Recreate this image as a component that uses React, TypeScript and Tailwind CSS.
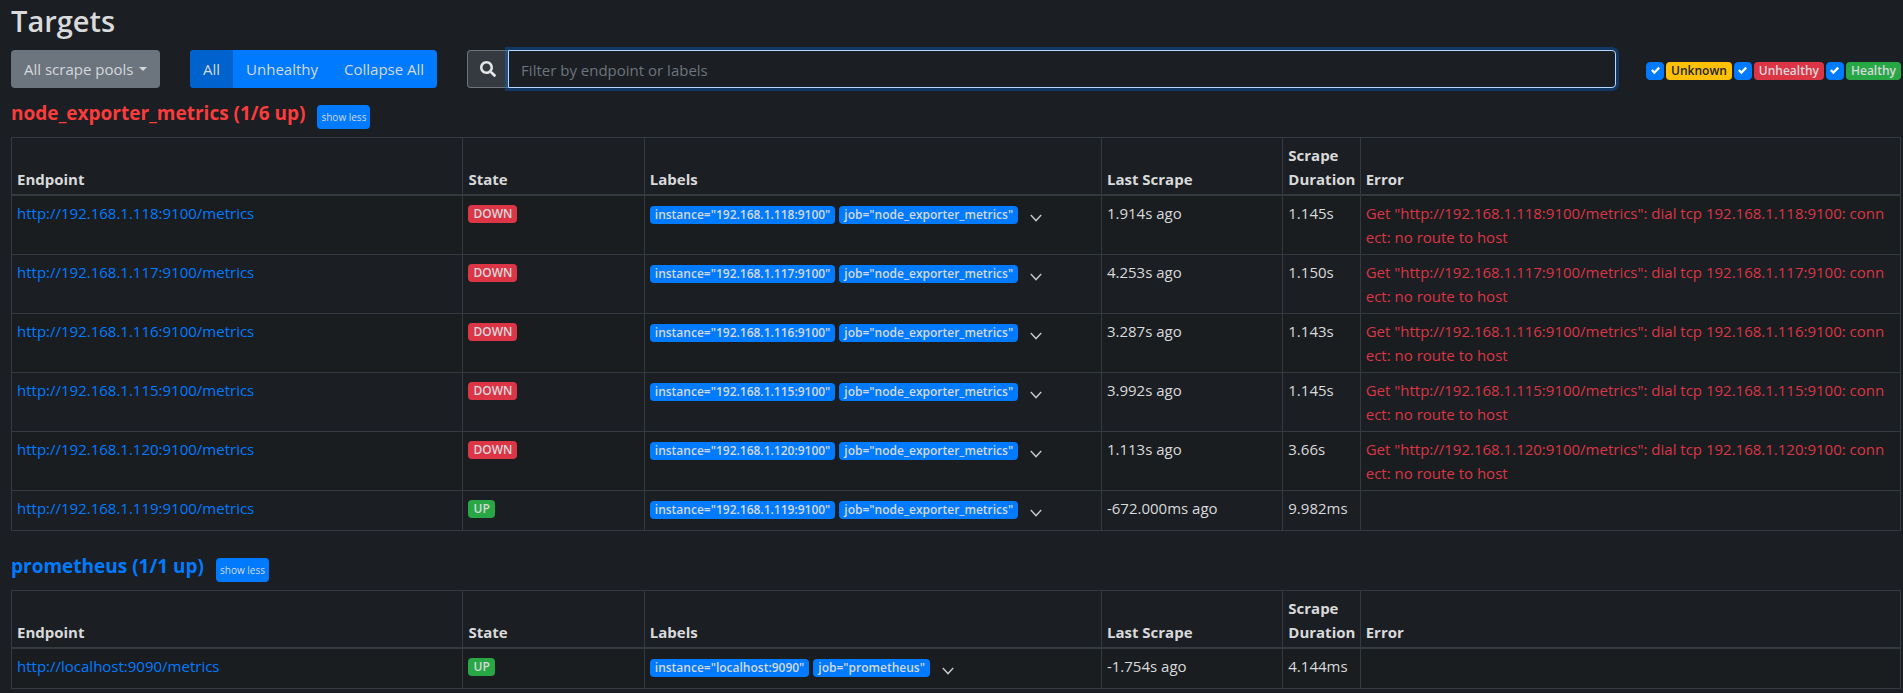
import React, { useState } from 'react';

type Target = {
  host: string;
  up: boolean;
  job: string;
  lastScrape: string;
  duration: string;
  error?: string;
};

type Pool = { name: string; summary: string; healthy: boolean; targets: Target[] };

const down = (host: string, lastScrape: string, duration: string): Target => ({
  host,
  up: false,
  job: 'node_exporter_metrics',
  lastScrape,
  duration,
  error: `Get "http://${host}/metrics": dial tcp ${host}: connect: no route to host`,
});

const pools: Pool[] = [
  {
    name: 'node_exporter_metrics',
    summary: '(1/6 up)',
    healthy: false,
    targets: [
      down('192.168.1.118:9100', '1.914s ago', '1.145s'),
      down('192.168.1.117:9100', '4.253s ago', '1.150s'),
      down('192.168.1.116:9100', '3.287s ago', '1.143s'),
      down('192.168.1.115:9100', '3.992s ago', '1.145s'),
      down('192.168.1.120:9100', '1.113s ago', '3.66s'),
      {
        host: '192.168.1.119:9100',
        up: true,
        job: 'node_exporter_metrics',
        lastScrape: '-672.000ms ago',
        duration: '9.982ms',
      },
    ],
  },
  {
    name: 'prometheus',
    summary: '(1/1 up)',
    healthy: true,
    targets: [
      { host: 'localhost:9090', up: true, job: 'prometheus', lastScrape: '-1.754s ago', duration: '4.144ms' },
    ],
  },
];

const badgeColors = {
  blue: 'bg-[#007bff] text-[#d5d8dc]',
  red: 'bg-[#dc3545] text-[#d5d8dc]',
  green: 'bg-[#28a745] text-[#d5d8dc]',
  yellow: 'bg-[#ffc107] text-[#212529]',
};

function Badge({ color, children }: { color: keyof typeof badgeColors; children: React.ReactNode }) {
  return (
    <span
      className={`inline-flex h-[18px] items-center rounded px-[5px] text-[12px] font-semibold whitespace-nowrap ${badgeColors[color]}`}
    >
      {children}
    </span>
  );
}

function HealthFilter({ color, name }: { color: keyof typeof badgeColors; name: string }) {
  return (
    <label className="flex items-center gap-[2px]">
      <span className="grid">
        <input
          type="checkbox"
          defaultChecked
          className="peer size-[18px] appearance-none rounded border border-[#adb5bd] [grid-area:1/1] checked:border-[#007bff] checked:bg-[#007bff]"
        />
        <svg
          viewBox="0 0 8 8"
          className="pointer-events-none hidden size-[9px] place-self-center [grid-area:1/1] peer-checked:block"
          aria-hidden="true"
        >
          <path fill="#fff" d="M6.564.75l-3.59 3.612-1.538-1.55L0 4.26l2.974 2.99L8 2.193z" />
        </svg>
      </span>
      <Badge color={color}>{name}</Badge>
    </label>
  );
}

function TargetRow({ target }: { target: Target }) {
  const url = `http://${target.host}/metrics`;
  const cell = 'border border-[#343a40] py-[5px] pl-[5px]';
  return (
    <tr className="align-top odd:bg-[#1a1d20]">
      <td className={cell}>
        <a href={url} className="text-[#007bff] hover:underline">
          {url}
        </a>
      </td>
      <td className={cell}>
        <div className="flex h-[25px] items-center">
          <Badge color={target.up ? 'green' : 'red'}>{target.up ? 'UP' : 'DOWN'}</Badge>
        </div>
      </td>
      <td className={cell}>
        <div className="flex h-[29px] items-start gap-1 pt-[5px]">
          <Badge color="blue">{`instance="${target.host}"`}</Badge>
          <Badge color="blue">{`job="${target.job}"`}</Badge>
          <button
            type="button"
            aria-label={`Show discovered labels of ${target.host}`}
            className="ml-1 flex h-6 w-5 items-center justify-center text-[#c3c6ca]"
          >
            <svg viewBox="0 0 12 8" className="h-2 w-3" fill="none" stroke="currentColor" strokeWidth="1.4" aria-hidden="true">
              <path d="M.8 1 6 6.6 11.2 1" />
            </svg>
          </button>
        </div>
      </td>
      <td className={cell}>{target.lastScrape}</td>
      <td className={cell}>{target.duration}</td>
      <td className={`${cell} pr-3 break-all text-[#dc3545]`}>{target.error}</td>
    </tr>
  );
}

function PoolSection({ pool }: { pool: Pool }) {
  const [open, setOpen] = useState(true);
  const head = 'border border-b-2 border-[#343a40] px-[5px] pt-[5px] pb-[3px] text-left align-bottom font-bold';
  return (
    <section>
      <div className="flex items-start gap-3">
        <h3 className={`text-[19px] leading-6 font-bold ${pool.healthy ? 'text-[#007bff]' : 'text-[#fb3c3c]'}`}>
          {pool.name} {pool.summary}
        </h3>
        <button
          type="button"
          onClick={() => setOpen(!open)}
          className="mt-1 h-6 rounded bg-[#007bff] px-1 pb-px text-[10px] leading-none text-[#d5d8dc]"
        >
          show {open ? 'less' : 'more'}
        </button>
      </div>
      {open && (
        <table className="mt-2 w-full table-fixed border-collapse">
          <colgroup>
            <col className="w-[23.9%]" />
            <col className="w-[9.6%]" />
            <col className="w-[24.2%]" />
            <col className="w-[9.6%]" />
            <col className="w-[4.1%]" />
            <col />
          </colgroup>
          <thead>
            <tr>
              <th className={head}>Endpoint</th>
              <th className={head}>State</th>
              <th className={head}>Labels</th>
              <th className={head}>Last Scrape</th>
              <th className={head}>Scrape Duration</th>
              <th className={head}>Error</th>
            </tr>
          </thead>
          <tbody>
            {pool.targets.map((t) => (
              <TargetRow key={t.host} target={t} />
            ))}
          </tbody>
        </table>
      )}
    </section>
  );
}

export default function App() {
  return (
    <main className="min-h-screen bg-[#1b1e22] pr-[2px] pl-[11px] font-['Open_Sans','Noto_Sans',sans-serif] text-[15px] leading-6 text-[#d9dadb]">
      <h2 className="pt-[2px] text-[29px] leading-[38px] font-semibold">Targets</h2>

      <div className="mt-[10px] flex items-center gap-[30px]">
        <label className="relative block">
          <select
            aria-label="Scrape pool"
            className="h-[38px] w-[149px] appearance-none rounded bg-[#6c757d] pl-[13px] text-[#d5d8dc]"
          >
            <option>All scrape pools</option>
            <option>node_exporter_metrics</option>
            <option>prometheus</option>
          </select>
          <span className="pointer-events-none absolute top-[17px] right-[13px] border-x-4 border-t-4 border-x-transparent border-t-[#d5d8dc]" />
        </label>

        <div className="flex h-[38px] overflow-hidden rounded bg-[#007bff] text-[#d5d8dc]">
          <button type="button" className="bg-[#0062cc] px-[13px]">
            All
          </button>
          <button type="button" className="px-[13px]">
            Unhealthy
          </button>
          <button type="button" className="px-[13px]">
            Collapse All
          </button>
        </div>

        <div className="flex h-[38px] flex-1">
          <span className="flex w-[41px] items-center justify-center rounded-l border border-r-0 border-[#6c757d] bg-[#343a40] text-[#e4e6e8]">
            <svg viewBox="0 0 512 512" className="size-4" fill="currentColor" aria-hidden="true">
              <path d="M505 442.7L405.3 343c-4.500-4.500-10.600-7-17-7H372c27.600-35.300 44-79.700 44-128C416 93.100 322.900 0 208 0S0 93.100 0 208s93.100 208 208 208c48.300 0 92.700-16.400 128-44v16.300c0 6.400 2.500 12.500 7 17l99.700 99.700c9.400 9.400 24.600 9.400 33.900 0l28.300-28.300c9.400-9.400 9.400-24.600.1-34zM208 336c-70.700 0-128-57.200-128-128 0-70.700 57.200-128 128-128 70.700 0 128 57.200 128 128 0 70.700-57.200 128-128 128z" />
            </svg>
          </span>
          <input
            type="text"
            aria-label="Filter by endpoint or labels"
            placeholder="Filter by endpoint or labels"
            className="min-w-0 flex-1 rounded-r border border-[#b3d7ff] bg-[#1b1e22] px-3 pt-px shadow-[0_0_0_3px_rgba(0,123,255,0.3)] outline-none placeholder:text-[#6c757d]"
          />
        </div>

        <div className="flex items-center gap-[2px] pt-[3px]">
          <HealthFilter color="yellow" name="Unknown" />
          <HealthFilter color="red" name="Unhealthy" />
          <HealthFilter color="green" name="Healthy" />
        </div>
      </div>

      <div className="mt-[13px] flex flex-col gap-[23px]">
        {pools.map((p) => (
          <PoolSection key={p.name} pool={p} />
        ))}
      </div>
    </main>
  );
}
